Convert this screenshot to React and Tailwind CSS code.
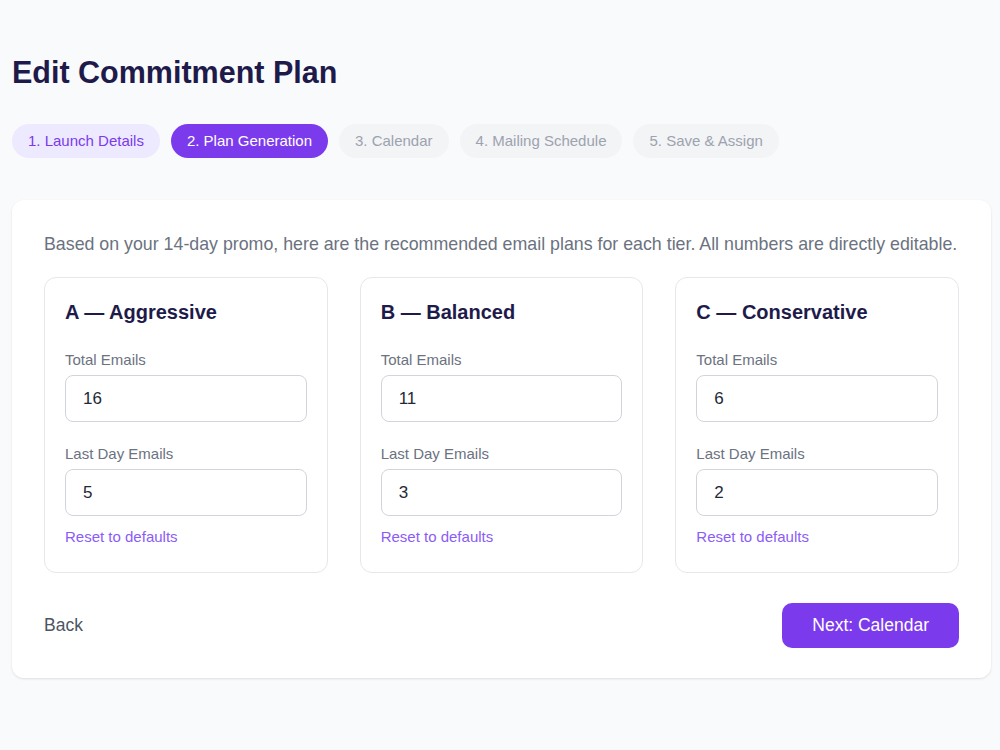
import React, { useState } from 'react'

const steps = [
  { label: '1. Launch Details', state: 'done' },
  { label: '2. Plan Generation', state: 'active' },
  { label: '3. Calendar', state: 'todo' },
  { label: '4. Mailing Schedule', state: 'todo' },
  { label: '5. Save & Assign', state: 'todo' },
]

const defaults = [
  { id: 'A', name: 'A — Aggressive', total: '16', last: '5' },
  { id: 'B', name: 'B — Balanced', total: '11', last: '3' },
  { id: 'C', name: 'C — Conservative', total: '6', last: '2' },
]

const pillStyles = {
  done: 'bg-[#ede9fe] text-[#7c3aed]',
  active: 'bg-[#7c3aed] text-white',
  todo: 'bg-[#f3f4f6] text-[#9ca3af]',
}

function TierCard({ tier, onChange, onReset }) {
  return (
    <div className="rounded-xl border border-[#e5e7eb] bg-white px-5 pt-5 pb-[25px]">
      <h3 className="text-[20px] font-bold leading-7 text-[#1e1b4b]">{tier.name}</h3>
      <label className="mt-6 block text-[15px] leading-5 text-[#6b7280]">Total Emails</label>
      <input
        type="text"
        value={tier.total}
        onChange={(e) => onChange('total', e.target.value)}
        className="mt-[5px] block h-[47px] w-full rounded-lg border border-[#d1d5db] bg-white px-[17px] text-[17px] text-[#1f2937] outline-none"
      />
      <label className="mt-[22px] block text-[15px] leading-5 text-[#6b7280]">Last Day Emails</label>
      <input
        type="text"
        value={tier.last}
        onChange={(e) => onChange('last', e.target.value)}
        className="mt-[5px] block h-[47px] w-full rounded-lg border border-[#d1d5db] bg-white px-[17px] text-[17px] text-[#1f2937] outline-none"
      />
      <button
        type="button"
        onClick={onReset}
        className="mt-[11px] block text-[15px] leading-5 text-[#8b5cf6]"
      >
        Reset to defaults
      </button>
    </div>
  )
}

export default function App() {
  const [tiers, setTiers] = useState(defaults)

  const update = (id, field, value) =>
    setTiers((prev) => prev.map((t) => (t.id === id ? { ...t, [field]: value } : t)))

  const reset = (id) =>
    setTiers((prev) => prev.map((t) => (t.id === id ? defaults.find((d) => d.id === id) : t)))

  return (
    <div className="min-h-screen bg-[#f9fafb] pl-3 pr-[9px] pt-[54px] pb-16 font-['Liberation_Sans',Arial,sans-serif]">
      <h1 className="text-[30.5px] font-bold leading-9 text-[#1e1b4b]">Edit Commitment Plan</h1>

      <div className="mt-[34px] flex gap-[11px]">
        {steps.map((s) => (
          <span key={s.label} className={`rounded-full px-4 py-2 text-[15px] leading-[18px] ${pillStyles[s.state]}`}>
            {s.label}
          </span>
        ))}
      </div>

      <div className="mt-[42px] rounded-xl bg-white px-8 pt-8 pb-[30px] shadow-[0_1px_3px_rgba(0,0,0,0.08),0_1px_2px_rgba(0,0,0,0.04)]">
        <p className="text-[17.8px] leading-6 text-[#6b7280]">
          Based on your 14-day promo, here are the recommended email plans for each tier. All numbers are directly editable.
        </p>

        <div className="mt-[21px] grid grid-cols-3 gap-8">
          {tiers.map((t) => (
            <TierCard
              key={t.id}
              tier={t}
              onChange={(field, value) => update(t.id, field, value)}
              onReset={() => reset(t.id)}
            />
          ))}
        </div>

        <div className="mt-[30px] flex items-center justify-between">
          <button type="button" className="text-[17.5px] text-[#4b5563]">Back</button>
          <button type="button" className="h-[45px] rounded-[10px] bg-[#7c3aed] px-[30px] text-[17.5px] text-white">
            Next: Calendar
          </button>
        </div>
      </div>
    </div>
  )
}
